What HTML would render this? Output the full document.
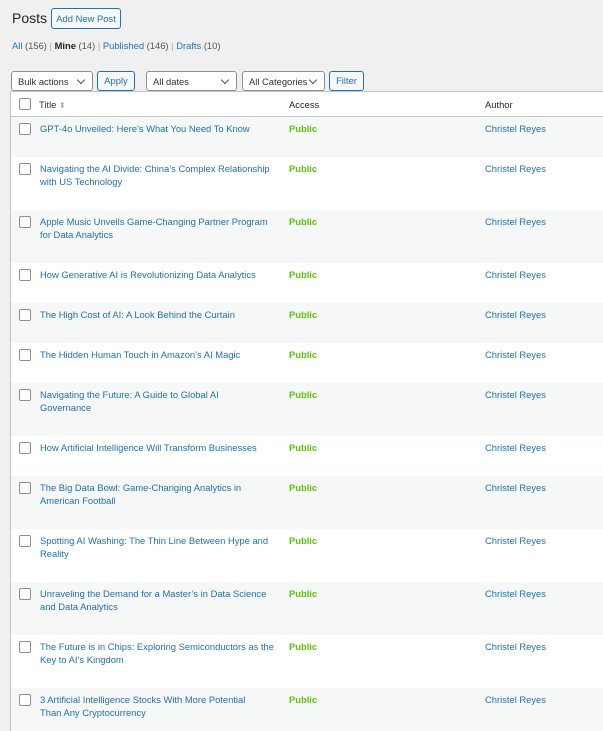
<!DOCTYPE html><html><head><style>
html,body{margin:0;overflow:hidden;height:731px}
body{background:#f0f0f1;font-family:"Liberation Sans",sans-serif;width:603px;position:relative;font-size:9.4px;color:#1d2327}
.a{position:absolute}
.btn{position:absolute;border:1px solid #2271b1;color:#2271b1;background:#f6f7f7;border-radius:3px;box-sizing:border-box;text-align:center;font-size:9.4px}
.sel{position:absolute;border:1px solid #8c8f94;background:#fff;border-radius:3px;box-sizing:border-box;font-size:9.4px;color:#2c3338;padding-left:6px;line-height:19px}
.sel:after{content:"";position:absolute;right:8px;top:5px;width:5px;height:5px;border-right:1.3px solid #50575e;border-bottom:1.3px solid #50575e;transform:rotate(45deg)}
.tbl{position:absolute;left:10px;top:91px;width:600px;height:645px;background:#fff;border:1px solid #c3c4c7;overflow:hidden}
.row{position:absolute;left:0;width:600px}
.alt{background:#f6f7f7}
.cb{position:absolute;left:8px;width:10px;height:10px;border:1px solid #8c8f94;border-radius:2px;background:#fff}
.t{position:absolute;left:29px;color:#2271b1;line-height:13px;white-space:nowrap}
.p{position:absolute;left:278px;color:#5ec20c;font-weight:bold}
.au{position:absolute;left:474px;color:#2271b1}
</style></head><body>
<div class="a" style="left:12px;top:10px;font-size:14px;color:#1d2327">Posts</div>
<div class="btn" style="left:51px;top:8px;width:70px;height:21px;line-height:19px">Add New Post</div>
<div class="a" style="left:12px;top:40px;color:#2271b1"><span>All <span style="color:#50575e">(156)</span></span> <span style="color:#a7aaad">|</span> <b style="color:#1d2327">Mine</b> <span style="color:#50575e">(14)</span> <span style="color:#a7aaad">|</span> Published <span style="color:#50575e">(146)</span> <span style="color:#a7aaad">|</span> Drafts <span style="color:#50575e">(10)</span></div>
<div class="sel" style="left:11px;top:71px;width:82px;height:20px">Bulk actions</div>
<div class="btn" style="left:97px;top:71px;width:38px;height:20px;line-height:18px;background:#f6f7f7">Apply</div>
<div class="sel" style="left:146px;top:71px;width:91px;height:20px">All dates</div>
<div class="sel" style="left:242px;top:71px;width:83px;height:20px">All Categories</div>
<div class="btn" style="left:329px;top:71px;width:35px;height:20px;line-height:18px">Filter</div>
<div class="tbl">
<div class="row" style="top:0;height:24px;border-bottom:1px solid #c3c4c7">
<div class="cb" style="top:6px"></div><div class="a" style="left:28px;top:7px;color:#2c3338">Title <span style="color:#a7aaad;font-size:8px">⬍</span></div>
<div class="a" style="left:278px;top:7px">Access</div><div class="a" style="left:474px;top:7px">Author</div></div>
<div class="row alt" style="top:25px;height:40px"><div class="cb" style="top:6px"></div><div class="t" style="top:5px">GPT-4o Unveiled: Here’s What You Need To Know</div><div class="p" style="top:6px">Public</div><div class="au" style="top:6px">Christel Reyes</div></div>
<div class="row" style="top:65px;height:53px"><div class="cb" style="top:6px"></div><div class="t" style="top:5px">Navigating the AI Divide: China’s Complex Relationship<br>with US Technology</div><div class="p" style="top:6px">Public</div><div class="au" style="top:6px">Christel Reyes</div></div>
<div class="row alt" style="top:118px;height:53px"><div class="cb" style="top:6px"></div><div class="t" style="top:5px">Apple Music Unveils Game-Changing Partner Program<br>for Data Analytics</div><div class="p" style="top:6px">Public</div><div class="au" style="top:6px">Christel Reyes</div></div>
<div class="row" style="top:171px;height:40px"><div class="cb" style="top:6px"></div><div class="t" style="top:5px">How Generative AI is Revolutionizing Data Analytics</div><div class="p" style="top:6px">Public</div><div class="au" style="top:6px">Christel Reyes</div></div>
<div class="row alt" style="top:211px;height:40px"><div class="cb" style="top:6px"></div><div class="t" style="top:5px">The High Cost of AI: A Look Behind the Curtain</div><div class="p" style="top:6px">Public</div><div class="au" style="top:6px">Christel Reyes</div></div>
<div class="row" style="top:251px;height:40px"><div class="cb" style="top:6px"></div><div class="t" style="top:5px">The Hidden Human Touch in Amazon’s AI Magic</div><div class="p" style="top:6px">Public</div><div class="au" style="top:6px">Christel Reyes</div></div>
<div class="row alt" style="top:291px;height:53px"><div class="cb" style="top:6px"></div><div class="t" style="top:5px">Navigating the Future: A Guide to Global AI<br>Governance</div><div class="p" style="top:6px">Public</div><div class="au" style="top:6px">Christel Reyes</div></div>
<div class="row" style="top:344px;height:40px"><div class="cb" style="top:6px"></div><div class="t" style="top:5px">How Artificial Intelligence Will Transform Businesses</div><div class="p" style="top:6px">Public</div><div class="au" style="top:6px">Christel Reyes</div></div>
<div class="row alt" style="top:384px;height:53px"><div class="cb" style="top:6px"></div><div class="t" style="top:5px">The Big Data Bowl: Game-Changing Analytics in<br>American Football</div><div class="p" style="top:6px">Public</div><div class="au" style="top:6px">Christel Reyes</div></div>
<div class="row" style="top:437px;height:53px"><div class="cb" style="top:6px"></div><div class="t" style="top:5px">Spotting AI Washing: The Thin Line Between Hype and<br>Reality</div><div class="p" style="top:6px">Public</div><div class="au" style="top:6px">Christel Reyes</div></div>
<div class="row alt" style="top:490px;height:53px"><div class="cb" style="top:6px"></div><div class="t" style="top:5px">Unraveling the Demand for a Master’s in Data Science<br>and Data Analytics</div><div class="p" style="top:6px">Public</div><div class="au" style="top:6px">Christel Reyes</div></div>
<div class="row" style="top:543px;height:53px"><div class="cb" style="top:6px"></div><div class="t" style="top:5px">The Future is in Chips: Exploring Semiconductors as the<br>Key to AI’s Kingdom</div><div class="p" style="top:6px">Public</div><div class="au" style="top:6px">Christel Reyes</div></div>
<div class="row alt" style="top:596px;height:64px"><div class="cb" style="top:6px"></div><div class="t" style="top:5px">3 Artificial Intelligence Stocks With More Potential<br>Than Any Cryptocurrency</div><div class="p" style="top:6px">Public</div><div class="au" style="top:6px">Christel Reyes</div></div>
</div>
</body></html>
